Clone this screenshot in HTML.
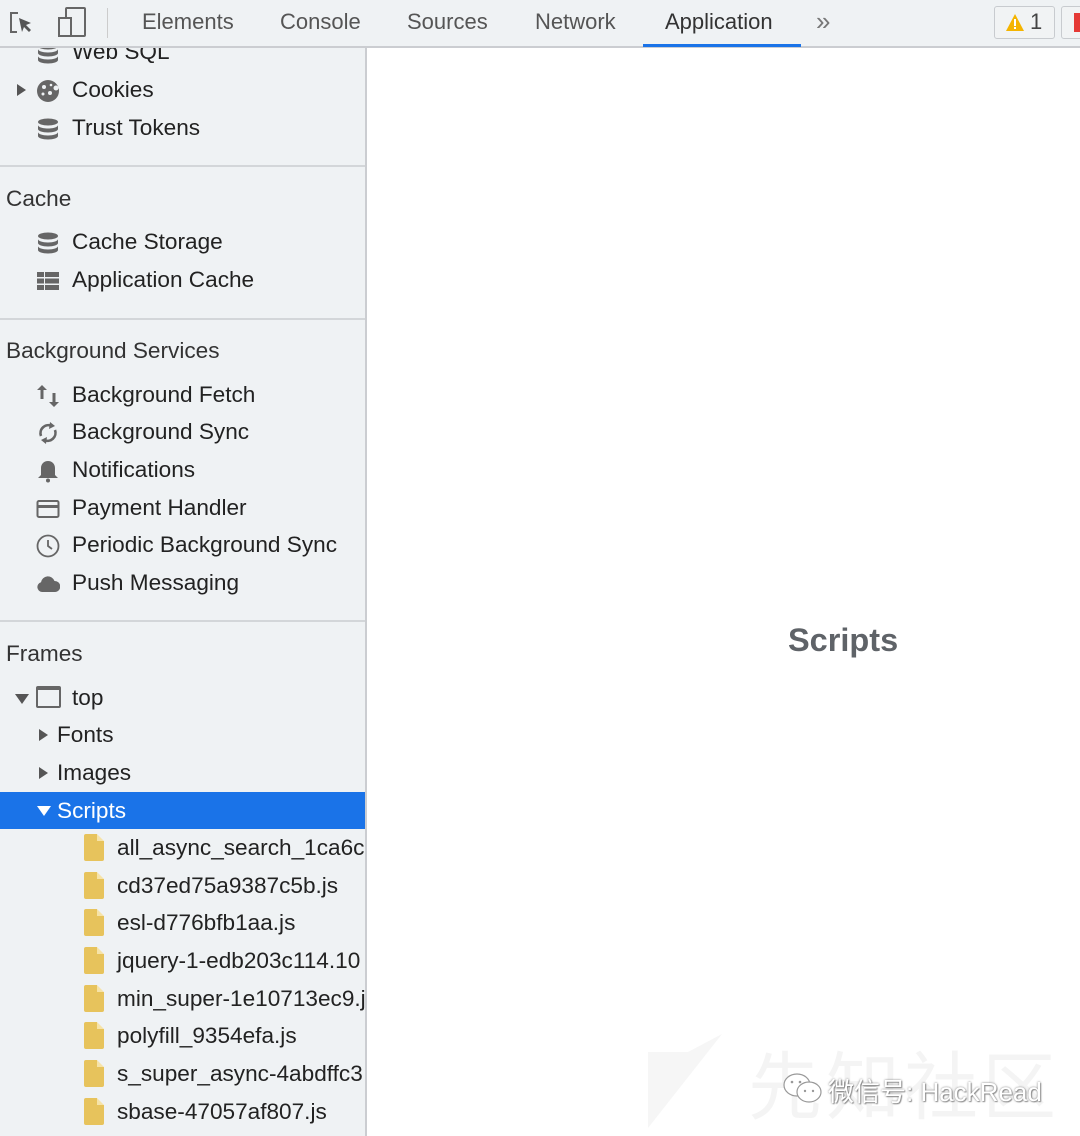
<!DOCTYPE html>
<html><head><meta charset="utf-8"><style>
*{margin:0;padding:0;box-sizing:border-box}
body{width:1080px;height:1136px;overflow:hidden;background:#fff;font-family:"Liberation Sans","Noto Sans CJK SC",sans-serif;position:relative;color:#222}
#top{position:absolute;left:0;top:0;width:1080px;height:48px;background:#eff2f4;border-bottom:2px solid #cbcdd1}
.tab{position:absolute;top:9px;font-size:22px;color:#555}
#side{position:absolute;left:0;top:48px;width:367px;height:1088px;background:#eff2f4;border-right:2px solid #cbcdd1;overflow:hidden}
.r{position:absolute;left:0;width:365px;height:38px;font-size:22.6px;line-height:38px;white-space:nowrap;color:#222}
.h{font-size:22.6px;left:6px;color:#333}
.div{position:absolute;left:0;width:365px;height:2px;background:#d3d6d9}
.ic{position:absolute;top:8px;left:36px;width:24px;height:24px}
.file{position:absolute;left:84px;top:5px;width:20px;height:27px;background:#e7c35c;border-radius:2px}
.file:after{content:"";position:absolute;right:0;top:0;border-style:solid;border-width:0 7px 7px 0;border-color:#eff2f4 #eff2f4 #f6e3a8 #f6e3a8}
.tri{position:absolute;width:0;height:0}
</style></head><body>
<div id="top">
<svg style="position:absolute;left:8px;top:9px" width="28" height="28" viewBox="0 0 28 28"><path d="M10 4H3v19h6" fill="none" stroke="#666" stroke-width="2"/><path d="M11 9l12 5-5 2 5 5-2 2-5-5-2 5z" fill="#555"/></svg>
<svg style="position:absolute;left:56px;top:6px" width="32" height="32" viewBox="0 0 32 32"><rect x="10" y="2" width="19" height="28" rx="1" fill="none" stroke="#666" stroke-width="2"/><rect x="3" y="12" width="12" height="18" fill="#eff2f4" stroke="#666" stroke-width="2"/></svg>
<div style="position:absolute;left:107px;top:8px;width:1px;height:30px;background:#ccc"></div>
<div class="tab" style="left:142px">Elements</div>
<div class="tab" style="left:280px">Console</div>
<div class="tab" style="left:407px">Sources</div>
<div class="tab" style="left:535px">Network</div>
<div class="tab" style="left:665px;color:#333">Application</div>
<div style="position:absolute;left:643px;top:44px;width:158px;height:3px;background:#1a73e8"></div>
<div class="tab" style="left:816px;top:6px;font-size:26px;color:#777">»</div>
<div style="position:absolute;left:994px;top:6px;width:61px;height:33px;border:1px solid #c8cbcf;border-radius:3px;background:#f1f3f4"></div>
<svg style="position:absolute;left:1005px;top:13px" width="20" height="19" viewBox="0 0 20 19"><path d="M10 1L19 18H1z" fill="#f4b400"/><rect x="9" y="6" width="2" height="7" fill="#fff"/><rect x="9" y="14" width="2" height="2" fill="#fff"/></svg>
<div class="tab" style="left:1030px;top:9px;color:#444">1</div>
<div style="position:absolute;left:1061px;top:6px;width:30px;height:33px;border:1px solid #c8cbcf;border-radius:3px;background:#f1f3f4"></div>
<div style="position:absolute;left:1074px;top:13px;width:8px;height:19px;background:#e53935"></div>
</div>
<div id="side">
<div class="r" style="top:-15px"><svg class="ic" viewBox="0 0 24 24"><g fill="#666"><ellipse cx="12" cy="5" rx="10" ry="3.5"/><path d="M2 8c0 2 4.5 3.5 10 3.5S22 10 22 8v4c0 2-4.5 3.5-10 3.5S2 14 2 12z"/><path d="M2 15c0 2 4.5 3.5 10 3.5S22 17 22 15v4c0 2-4.5 3.5-10 3.5S2 21 2 19z"/></g></svg><span style="position:absolute;left:72px">Web SQL</span></div>
<div class="r" style="top:23px"><div class="tri" style="left:17px;top:13px;border-left:9px solid #555;border-top:6px solid transparent;border-bottom:6px solid transparent"></div><svg class="ic" viewBox="0 0 24 24"><circle cx="12" cy="12" r="11" fill="#666"/><g fill="#eff2f4"><circle cx="8" cy="8" r="2"/><circle cx="14" cy="14" r="2"/><circle cx="7" cy="15" r="1.5"/><circle cx="15" cy="6" r="1.3"/><circle cx="20" cy="9" r="2.5"/></g></svg><span style="position:absolute;left:72px">Cookies</span></div>
<div class="r" style="top:61px"><svg class="ic" viewBox="0 0 24 24"><g fill="#666"><ellipse cx="12" cy="5" rx="10" ry="3.5"/><path d="M2 8c0 2 4.5 3.5 10 3.5S22 10 22 8v4c0 2-4.5 3.5-10 3.5S2 14 2 12z"/><path d="M2 15c0 2 4.5 3.5 10 3.5S22 17 22 15v4c0 2-4.5 3.5-10 3.5S2 21 2 19z"/></g></svg><span style="position:absolute;left:72px">Trust Tokens</span></div>
<div class="div" style="top:117px"></div>
<div class="r h" style="top:132px">Cache</div>
<div class="r" style="top:175px"><svg class="ic" viewBox="0 0 24 24"><g fill="#666"><ellipse cx="12" cy="5" rx="10" ry="3.5"/><path d="M2 8c0 2 4.5 3.5 10 3.5S22 10 22 8v4c0 2-4.5 3.5-10 3.5S2 14 2 12z"/><path d="M2 15c0 2 4.5 3.5 10 3.5S22 17 22 15v4c0 2-4.5 3.5-10 3.5S2 21 2 19z"/></g></svg><span style="position:absolute;left:72px">Cache Storage</span></div>
<div class="r" style="top:213px"><svg class="ic" viewBox="0 0 24 24"><g fill="#666"><rect x="1" y="3" width="7" height="5"/><rect x="9" y="3" width="14" height="5"/><rect x="1" y="9.5" width="7" height="5"/><rect x="9" y="9.5" width="14" height="5"/><rect x="1" y="16" width="7" height="5"/><rect x="9" y="16" width="14" height="5"/></g></svg><span style="position:absolute;left:72px">Application Cache</span></div>
<div class="div" style="top:270px"></div>
<div class="r h" style="top:284px">Background Services</div>
<div class="r" style="top:328px"><svg class="ic" viewBox="0 0 24 24"><g fill="#666"><path d="M6 1l5 5H7.5v9h-3V6H1z"/><path d="M18 23l5-5h-3.5V9h-3v9H13z"/></g></svg><span style="position:absolute;left:72px">Background Fetch</span></div>
<div class="r" style="top:365px"><svg class="ic" viewBox="0 0 24 24"><g fill="none" stroke="#666" stroke-width="2.6"><path d="M5 15a8 8 0 0 1 11-10"/><path d="M19 9a8 8 0 0 1-11 10"/></g><path d="M14 1l5 4-6 3z" fill="#666"/><path d="M10 23l-5-4 6-3z" fill="#666"/></svg><span style="position:absolute;left:72px">Background Sync</span></div>
<div class="r" style="top:403px"><svg class="ic" viewBox="0 0 24 24"><path d="M12 2c-4 0-7 3-7 7v7l-3 3h20l-3-3V9c0-4-3-7-7-7z" fill="#666"/><circle cx="12" cy="21.5" r="2" fill="#666"/></svg><span style="position:absolute;left:72px">Notifications</span></div>
<div class="r" style="top:441px"><svg class="ic" viewBox="0 0 24 24"><rect x="1.5" y="4" width="21" height="16" rx="1.5" fill="none" stroke="#666" stroke-width="2"/><rect x="1.5" y="8" width="21" height="3" fill="#666"/></svg><span style="position:absolute;left:72px">Payment Handler</span></div>
<div class="r" style="top:478px"><svg class="ic" viewBox="0 0 24 24"><circle cx="12" cy="12" r="10.5" fill="none" stroke="#666" stroke-width="1.8"/><path d="M12 6v6l4 3" fill="none" stroke="#666" stroke-width="1.8"/></svg><span style="position:absolute;left:72px">Periodic Background Sync</span></div>
<div class="r" style="top:516px"><svg class="ic" viewBox="0 0 24 24"><path d="M6 20a5 5 0 0 1-1-9.8A7 7 0 0 1 18.5 9 5.5 5.5 0 0 1 19 20z" fill="#666"/></svg><span style="position:absolute;left:72px">Push Messaging</span></div>
<div class="div" style="top:572px"></div>
<div class="r h" style="top:587px">Frames</div>
<div class="r" style="top:631px"><div class="tri" style="left:15px;top:15px;border-top:10px solid #555;border-left:7px solid transparent;border-right:7px solid transparent"></div><div style="position:absolute;left:36px;top:7px;width:25px;height:22px;border:2px solid #666;border-top-width:4px;border-radius:2px"></div><span style="position:absolute;left:72px">top</span></div>
<div class="r" style="top:668px"><div class="tri" style="left:39px;top:13px;border-left:9px solid #555;border-top:6px solid transparent;border-bottom:6px solid transparent"></div><span style="position:absolute;left:57px">Fonts</span></div>
<div class="r" style="top:706px"><div class="tri" style="left:39px;top:13px;border-left:9px solid #555;border-top:6px solid transparent;border-bottom:6px solid transparent"></div><span style="position:absolute;left:57px">Images</span></div>
<div class="r" style="top:744px;height:37px;background:#1a73e8;color:#fff"><div class="tri" style="left:37px;top:14px;border-top:10px solid #fff;border-left:7px solid transparent;border-right:7px solid transparent"></div><span style="position:absolute;left:57px">Scripts</span></div>
<div class="r" style="top:781px"><div class="file"></div><span style="position:absolute;left:117px">all_async_search_1ca6c6</span></div>
<div class="r" style="top:819px"><div class="file"></div><span style="position:absolute;left:117px">cd37ed75a9387c5b.js</span></div>
<div class="r" style="top:856px"><div class="file"></div><span style="position:absolute;left:117px">esl-d776bfb1aa.js</span></div>
<div class="r" style="top:894px"><div class="file"></div><span style="position:absolute;left:117px">jquery-1-edb203c114.10</span></div>
<div class="r" style="top:932px"><div class="file"></div><span style="position:absolute;left:117px">min_super-1e10713ec9.js</span></div>
<div class="r" style="top:969px"><div class="file"></div><span style="position:absolute;left:117px">polyfill_9354efa.js</span></div>
<div class="r" style="top:1007px"><div class="file"></div><span style="position:absolute;left:117px">s_super_async-4abdffc3</span></div>
<div class="r" style="top:1045px"><div class="file"></div><span style="position:absolute;left:117px">sbase-47057af807.js</span></div>
</div>
<div style="position:absolute;left:788px;top:622px;font-size:32.5px;font-weight:bold;color:#5f6368">Scripts</div>
<svg style="position:absolute;left:644px;top:1030px" width="80" height="100"><path d="M78 4L4 98V22h40z" fill="#f6f6f6"/></svg>
<div style="position:absolute;left:748px;top:1028px;font-size:74px;color:#f4f4f4;letter-spacing:4px;font-family:'Noto Sans CJK SC',sans-serif">先知社区</div>
<svg style="position:absolute;left:782px;top:1072px" width="42" height="34" viewBox="0 0 42 34"><ellipse cx="15" cy="13" rx="13" ry="11" fill="#fff" stroke="#999" stroke-width="1.2"/><ellipse cx="27" cy="20" rx="12" ry="10" fill="#fff" stroke="#999" stroke-width="1.2"/><g fill="#999"><circle cx="10" cy="10" r="1.3"/><circle cx="18" cy="10" r="1.3"/><circle cx="23" cy="19" r="1.2"/><circle cx="31" cy="19" r="1.2"/></g></svg>
<div style="position:absolute;left:828px;top:1072px;font-size:26px;color:#fff;text-shadow:0 0 2px #777,1px 1px 1px #999;font-family:'Liberation Sans','Noto Sans CJK SC',sans-serif">微信号: HackRead</div>
</body></html>
